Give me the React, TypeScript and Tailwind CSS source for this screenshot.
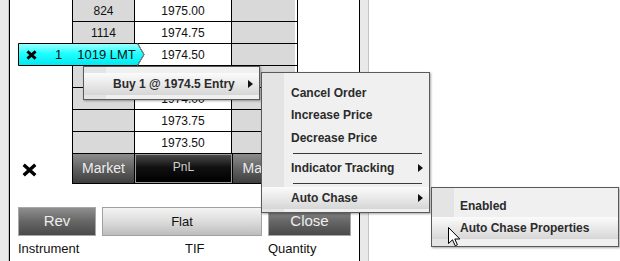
import React from "react";

function XMark({ w, h, sw }: { w: number; h: number; sw: number }) {
  return (
    <svg width={w} height={h} viewBox={`0 0 ${w} ${h}`}>
      <path
        d={`M${sw / 2} ${sw / 2} L${w - sw / 2} ${h - sw / 2} M${w - sw / 2} ${sw / 2} L${sw / 2} ${h - sw / 2}`}
        stroke="black"
        strokeWidth={sw}
        strokeLinecap="butt"
      />
    </svg>
  );
}

function Tri() {
  return (
    <svg width="5" height="8" viewBox="0 0 5 8">
      <path d="M0 0 L5 4 L0 8 Z" fill="#111" />
    </svg>
  );
}

const rows: [string, string][] = [
  ["824", "1975.00"],
  ["1114", "1974.75"],
  ["", "1974.50"],
  ["", "1974.25"],
  ["", "1974.00"],
  ["", "1973.75"],
  ["", "1973.50"],
];

const hi = "bg-[linear-gradient(#fbfbfb,#e9e9e9_50%,#d6d6d6)]";

function MenuItem({ label, arrow, active, pl, h = "h-[22px]" }: { label: string; arrow?: boolean; active?: boolean; pl: string; h?: string }) {
  return (
    <div className={`relative flex ${h} items-center ${pl} pr-[6px] ${active ? hi : ""}`}>
      <span className="flex-1 text-[12px] font-bold text-[#2b2b2b]">{label}</span>
      {arrow && <Tri />}
    </div>
  );
}

function Sep() {
  return (
    <div className="flex h-[8px] items-center pl-[31px] pr-[7px]">
      <div className="h-px w-full bg-[#3a3a3a]" />
    </div>
  );
}

export default function App() {
  return (
    <div className="relative flex h-[261px] w-[620px] overflow-hidden bg-white font-['Liberation_Sans',Arial,sans-serif] text-[#111]">
      {/* left strip */}
      <div className="h-full w-[9px] border-r border-[#c4c4c4] bg-[#e9e9e9]" />
      {/* panel */}
      <div className="h-full w-[351px] border-x border-black bg-white">
        <div className="pl-[62px]">
          <div className="w-[226px] border-x border-black">
            {rows.map(([a, b], i) => (
              <div key={i} className="flex h-[22px] border-b border-black text-[12px]">
                <div className="flex w-[62px] items-center justify-center border-r border-black bg-[#d9d9d9]">{a}</div>
                <div className="flex w-[97px] items-center justify-center border-r border-black bg-white">{b}</div>
                <div className="w-[63px] bg-[#d9d9d9]" />
              </div>
            ))}
          </div>
        </div>
        {/* bottom bar */}
        <div className="flex h-[30px]">
          <div className="flex w-[62px] items-start pl-[12px] pt-[9px]">
            <XMark w={15} h={14} sw={3.4} />
          </div>
          <div className="flex w-[226px] border-x border-b border-black">
            <div className="flex w-[62px] items-center justify-center border-r border-black bg-[linear-gradient(#8c8c8c,#5e5e5e_55%,#3e3e3e)] text-[14px] text-[#ececec]">
              Market
            </div>
            <div className="flex w-[97px] items-start justify-center border border-[#9a9a9a] bg-[linear-gradient(#4a4a4a,#111_45%,#000)] pt-[3px] text-[12px] text-[#cfcfcf]">
              PnL
            </div>
            <div className="flex w-[63px] items-center justify-center border-l border-black bg-[linear-gradient(#8c8c8c,#5e5e5e_55%,#3e3e3e)] text-[14px] text-[#ececec]">
              Market
            </div>
          </div>
        </div>
        {/* buttons */}
        <div className="mt-[23px] flex gap-[6px] pl-[8px]">
          <div className="flex h-[29px] w-[78px] items-center justify-center border border-[#a8a8a8] bg-[linear-gradient(#8e8e8e,#666_50%,#4a4a4a)] text-[15px] text-[#eeeeee]">
            Rev
          </div>
          <div className="flex h-[29px] w-[160px] items-center justify-center border border-[#a0a0a0] bg-[linear-gradient(#f4f4f4,#dcdcdc_50%,#bdbdbd)] text-[13px] text-[#111]">
            Flat
          </div>
          <div className="flex h-[29px] w-[83px] items-center justify-center border border-[#a8a8a8] bg-[linear-gradient(#8e8e8e,#666_50%,#4a4a4a)] text-[15px] text-[#eeeeee]">
            Close
          </div>
        </div>
        <div className="mt-[5px] flex h-[16px] items-center pl-[8px] text-[13px] text-[#111]">
          <span className="w-[167px]">Instrument</span>
          <span className="w-[83px]">TIF</span>
          <span>Quantity</span>
        </div>
      </div>
      {/* right strip */}
      <div className="h-full w-[9px] border-r border-[#c4c4c4] bg-[#e9e9e9]" />
      <div className="flex-1 bg-white" />

      {/* order flag */}
      <div className="absolute left-[18px] top-[43px] h-[23px] w-[127px]">
        <svg className="absolute inset-0" width="127" height="23" viewBox="0 0 127 23">
          <defs>
            <linearGradient id="cy" x1="0" y1="0" x2="0" y2="1">
              <stop offset="0" stopColor="#a6ffff" />
              <stop offset="0.45" stopColor="#20ffff" />
              <stop offset="1" stopColor="#00e8f0" />
            </linearGradient>
          </defs>
          <path d="M0.5 0.5 H119.5 L126 11.5 L119.5 22.5 H0.5 Z" fill="url(#cy)" stroke="#000" strokeWidth="1" />
          <path d="M119.5 0.5 L126 11.5 L119.5 22.5" fill="none" stroke="#8a8a8a" strokeWidth="1" />
        </svg>
        <div className="relative flex h-full items-center text-[13px] text-[#111]">
          <span className="ml-[8px] flex"><XMark w={11} h={10} sw={2.8} /></span>
          <span className="ml-[18px]">1</span>
          <span className="ml-[15px]">1019 LMT</span>
        </div>
      </div>

      {/* Buy menu */}
      <div className="absolute left-[83px] top-[66px] h-[34px] w-[177px] border border-[#5a5a5a] bg-[#f0f0f0] pt-[6px] shadow-[1px_1px_2px_rgba(0,0,0,0.35)]">
        <div className="absolute bottom-0 left-0 top-0 w-[22px] bg-[#e4e4e4]" />
        <MenuItem label="Buy 1 @ 1974.5 Entry" arrow active pl="pl-[29px]" />
      </div>

      {/* main menu */}
      <div className="absolute left-[261px] top-[72px] h-[141px] w-[169px] border border-[#5a5a5a] bg-[#f0f0f0] pt-[9px] shadow-[1px_1px_2px_rgba(0,0,0,0.35)]">
        <div className="absolute bottom-0 left-0 top-0 w-[22px] bg-[#e4e4e4]" />
        <MenuItem label="Cancel Order" pl="pl-[29px]" />
        <MenuItem label="Increase Price" pl="pl-[29px]" />
        <MenuItem label="Decrease Price" pl="pl-[29px]" h="h-[23px]" />
        <Sep />
        <MenuItem label="Indicator Tracking" arrow pl="pl-[29px]" />
        <Sep />
        <MenuItem label="Auto Chase" arrow active pl="pl-[29px]" />
      </div>

      {/* submenu */}
      <div className="absolute left-[431px] top-[187px] h-[60px] w-[188px] border border-[#5a5a5a] bg-[#f0f0f0] pt-[7px] shadow-[1px_1px_2px_rgba(0,0,0,0.35)]">
        <div className="absolute bottom-0 left-0 top-0 w-[22px] bg-[#e4e4e4]" />
        <MenuItem label="Enabled" pl="pl-[28px]" />
        <MenuItem label="Auto Chase Properties" active pl="pl-[28px]" />
      </div>

      {/* cursor */}
      <svg className="absolute left-[448px] top-[227px]" width="13" height="20" viewBox="0 0 13 20">
        <path d="M0.5 0.5 L0.5 16.5 L4.5 12.8 L7.2 18.8 L9.4 17.8 L6.8 12 L11.8 12 Z" fill="#fff" stroke="#000" strokeWidth="1" strokeLinejoin="miter" />
      </svg>
    </div>
  );
}
